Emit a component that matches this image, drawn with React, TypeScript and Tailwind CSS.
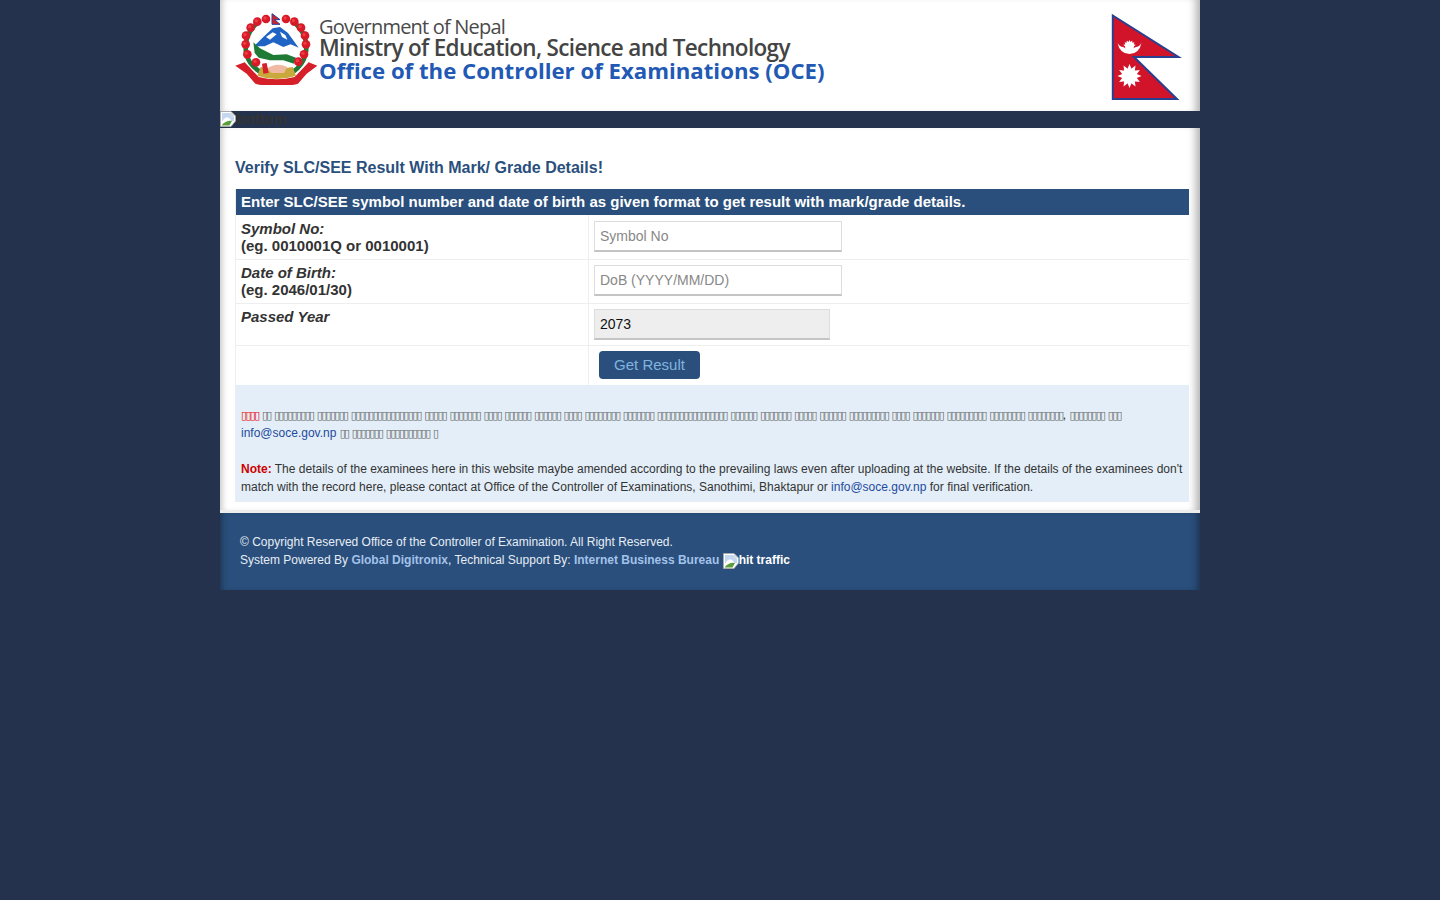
import React from 'react'

const flowers = [
  [108, 42], [82, 50], [62, 68], [48, 92], [47, 118], [52, 148], [78, 172],
  [168, 42], [193, 50], [213, 68], [225, 92], [228, 118], [222, 148], [205, 170],
]

// the reference has these words as missing-glyph boxes, only their lengths are readable
const boxes = (counts: number[]) => counts.map((n) => '▯'.repeat(n)).join(' ')

function Tofu({ counts, color = 'text-[#666]' }: { counts: number[]; color?: string }) {
  return (
    <span
      style={{ fontFamily: '"DejaVu Sans", sans-serif' }}
      className={`text-[11px] leading-none tracking-[-1.67px] [word-spacing:1.5px] ${color}`}
    >
      {boxes(counts)}
    </span>
  )
}

function Emblem() {
  return (
    <svg width="84" height="72" viewBox="15 24 252 216" className="shrink-0">
      {/* wreath */}
      <path d="M86 50 Q36 92 50 150 Q58 180 90 200" fill="none" stroke="#1f7a35" strokeWidth="14" />
      <path d="M190 50 Q240 92 226 150 Q218 180 190 200" fill="none" stroke="#1f7a35" strokeWidth="14" />
      {/* ribbon */}
      <path d="M16 182 L44 172 L86 216 Q140 230 194 216 L236 172 L262 182 L230 206 L204 236 Q140 254 76 236 L50 206 Z" fill="#d5202a" />
      <path d="M92 186 Q140 196 188 186 L198 212 Q140 232 82 212 Z" fill="#c9a93c" />
      {/* inner white */}
      <path d="M68 125 Q72 72 135 66 Q204 72 208 125 Q206 165 186 186 L94 186 Q72 165 68 125 Z" fill="#ffffff" />
      {/* blue mountain */}
      <path d="M72 124 L100 96 L128 70 L150 66 L174 84 L206 128 L182 118 L160 126 L130 112 L104 124 Z" fill="#1f63c4" />
      <path d="M108 96 L128 82 L140 88 L120 104 Z M150 80 L166 90 L172 104 L156 96 Z" fill="#ffffff" />
      {/* green hills */}
      <path d="M70 112 L90 130 L130 150 L170 148 L198 158 L192 176 L160 166 L120 166 L86 158 L74 144 Z" fill="#1e7a34" />
      {/* hands */}
      <path d="M112 190 Q140 170 172 186 L162 204 L124 204 Z" fill="#efb9a4" />
      <path d="M96 176 L110 174 L116 204 L100 206 Z" fill="#d5202a" />
      {flowers.map(([cx, cy]) => (
        <g key={`${cx}-${cy}`}>
          <circle cx={cx} cy={cy} r="13" fill="#d81a28" />
          <circle cx={cx - 3} cy={cy - 3} r="5" fill="#ee3d45" />
        </g>
      ))}
      {/* small flag */}
      <path d="M126 26 L150 44 L134 44 L150 58 L126 58 Z" fill="#d5202a" stroke="#24429a" strokeWidth="3" />
    </svg>
  )
}

function Flag() {
  const rays = Array.from({ length: 12 }, (_, i) => (i * 360) / 12)
  const moonRays = [-75, -50, -25, 0, 25, 50, 75]
  return (
    <svg width="72" height="88" viewBox="1111 12 72 88" className="shrink-0">
      <path d="M1112.8 14.5 L1178.5 56 L1134 56 L1177 98 L1112.8 98 Z" fill="#d2142b" stroke="#27408f" strokeWidth="2" />
      <path d="M1117.5 42 Q1120 46 1123 46 Q1129 50 1136 46 Q1139 46 1141.5 42 Q1139 53 1129.5 53 Q1120 53 1117.5 42 Z" fill="#ffffff" />
      <circle cx="1129.5" cy="45.5" r="4.5" fill="#ffffff" />
      {moonRays.map((r) => (
        <path key={r} d="M1128 42 L1129.5 39 L1131 42 Z" fill="#ffffff" transform={`rotate(${r} 1129.5 45.5)`} />
      ))}
      <circle cx="1129.5" cy="75" r="7.5" fill="#ffffff" />
      {rays.map((r) => (
        <path key={r} d="M1127 69 L1129.5 63 L1132 69 Z" fill="#ffffff" transform={`rotate(${r} 1129.5 75)`} />
      ))}
    </svg>
  )
}

function BrokenImage() {
  return (
    <svg width="16" height="16" viewBox="0 0 16 16" className="inline-block shrink-0">
      <path d="M0.5 0.5 H11 L15.5 5 V10 L11 15.5 H0.5 Z" fill="#ffffff" stroke="#a9a9a9" />
      <path d="M2 2 H10.5 L14 6 V10 L2 10 Z" fill="#c3d7f0" />
      <path d="M3 9 Q6 5 9 7 L11 9 V11 H3 Z" fill="#ffffff" />
      <path d="M1.5 14.5 Q6 9 12 10 L9.5 14.5 Z" fill="#5a9e3c" />
      <path d="M11 1 L15 5 H11 Z" fill="#dddddd" />
    </svg>
  )
}

export default function App() {
  const font = { fontFamily: '"Liberation Sans", Arial, sans-serif' }
  return (
    <div style={font} className="min-h-[900px] bg-[#24324d] text-xs leading-[18px] text-[#333]">
      <div className="ml-[220px] w-[980px]">
        <header className="flex h-[111px] items-start justify-between bg-white pl-[15px] pr-[17px] pt-[13px] shadow-[inset_7px_0_6px_-5px_#c4c4c4,inset_-10px_0_8px_-6px_#b0b0b0]">
          <div className="flex items-start">
            <Emblem />
            <div className="pt-[3px]" style={{ fontFamily: '"Open Sans", sans-serif' }}>
              <div className="text-[20px] leading-[21px] tracking-[-0.8px] text-[#4a4a4a]">Government of Nepal</div>
              <div className="text-[22.5px] font-semibold leading-[22px] tracking-[-0.67px] text-[#444]">
                Ministry of Education, Science and Technology
              </div>
              <div className="text-[22.2px] font-bold leading-[23px] text-[#2159b5]">
                Office of the Controller of Examinations (OCE)
              </div>
            </div>
          </div>
          <Flag />
        </header>

        <div className="flex h-[17px] items-start">
          <BrokenImage />
          <span className="text-[15px] font-bold leading-[15px] text-[#333]">bottom</span>
        </div>

        <main className="border-b-[3px] border-[#eceeec] bg-white pb-2 pl-[15px] pr-[11px] shadow-[inset_7px_0_6px_-5px_#c4c4c4,inset_-10px_0_8px_-6px_#b0b0b0]">
          <h1 className="pb-[11px] pt-[30px] text-base font-bold leading-[20px] text-[#2a4f7c]">
            Verify SLC/SEE Result With Mark/ Grade Details!
          </h1>

          <section className="border-l border-[#eeeeee]">
            <div className="h-[26px] bg-[#2a4f7c] pl-[5px] text-[15px] font-bold leading-[25px] text-white">
              Enter SLC/SEE symbol number and date of birth as given format to get result with mark/grade details.
            </div>

            <div className="grid grid-cols-[353px_1fr] text-[15px] font-bold leading-[17px]">
              <div className="h-[45px] border-b border-r border-[#eeeeee] pl-[5px] pt-[5px]">
                <i>Symbol No:</i>
                <br />
                (eg. 0010001Q or 0010001)
              </div>
              <div className="h-[45px] border-b border-[#eeeeee] pl-[5px] pt-[6px]">
                <input
                  placeholder="Symbol No"
                  className="block h-[31px] w-[248px] border border-b-2 border-[#dddddd] border-b-[#c4c4c4] px-[5px] text-sm font-normal outline-none placeholder:text-[#888]"
                />
              </div>

              <div className="h-[44px] border-b border-r border-[#eeeeee] pl-[5px] pt-[4px]">
                <i>Date of Birth:</i>
                <br />
                (eg. 2046/01/30)
              </div>
              <div className="h-[44px] border-b border-[#eeeeee] pl-[5px] pt-[5px]">
                <input
                  placeholder="DoB (YYYY/MM/DD)"
                  className="block h-[31px] w-[248px] border border-b-2 border-[#dddddd] border-b-[#c4c4c4] px-[5px] text-sm font-normal outline-none placeholder:text-[#888]"
                />
              </div>

              <div className="h-[42px] border-b border-r border-[#eeeeee] pl-[5px] pt-[4px]">
                <i>Passed Year</i>
              </div>
              <div className="h-[42px] border-b border-[#eeeeee] pl-[5px] pt-[5px]">
                <input
                  readOnly
                  value="2073"
                  className="block h-[31px] w-[236px] border border-b-2 border-[#dddddd] border-b-[#c4c4c4] bg-[#eeeeee] px-[5px] text-sm font-normal text-[#111] outline-none"
                />
              </div>

              <div className="h-[39px] border-r border-[#eeeeee]" />
              <div className="h-[39px] pl-[10px] pt-[5px]">
                <button
                  type="button"
                  className="h-[28px] w-[101px] rounded-[4px] bg-[#2a4f7c] pb-[2px] text-[15px] font-normal text-[#80b4e0]"
                >
                  Get Result
                </button>
              </div>
            </div>

            <div className="bg-[#e3eef8] pb-[6px] pl-[5px] pr-[5px] pt-[21px]">
              <p>
                <Tofu counts={[4]} color="text-[#e00]" />{' '}
                <Tofu counts={[2, 9, 7, 16, 5, 7, 4, 6, 6, 4, 8, 7, 16, 6, 7, 5, 6, 9, 4, 7, 9, 8, 8]} />,{' '}
                <Tofu counts={[8, 3]} />{' '}
                <a className="text-[#1f4a9c]">info@soce.gov.np</a> <Tofu counts={[2, 7, 10, 1]} />
              </p>
              <p className="mt-[18px]">
                <b className="text-[#d00000]">Note:</b> The details of the examinees here in this website maybe amended according to the prevailing laws even after uploading at the website. If the details of the examinees don't match with the record here, please contact at Office of the Controller of Examinations, Sanothimi, Bhaktapur or{' '}
                <a className="text-[#1f4a9c]">info@soce.gov.np</a> for final verification.
              </p>
            </div>
          </section>
        </main>

        <footer className="h-[77px] bg-[#2a4f7c] pl-5 pt-5 text-[#e6edf5] shadow-[inset_6px_0_6px_-4px_#1f3553,inset_-8px_0_6px_-5px_#1f3553]">
          <div>© Copyright Reserved Office of the Controller of Examination. All Right Reserved.</div>
          <div>
            System Powered By <b className="text-[#a3c2ea]">Global Digitronix</b>, Technical Support By:{' '}
            <b className="text-[#a3c2ea]">Internet Business Bureau</b>{' '}
            <BrokenImage />
            <b className="text-white">hit traffic</b>
          </div>
        </footer>
      </div>
    </div>
  )
}
